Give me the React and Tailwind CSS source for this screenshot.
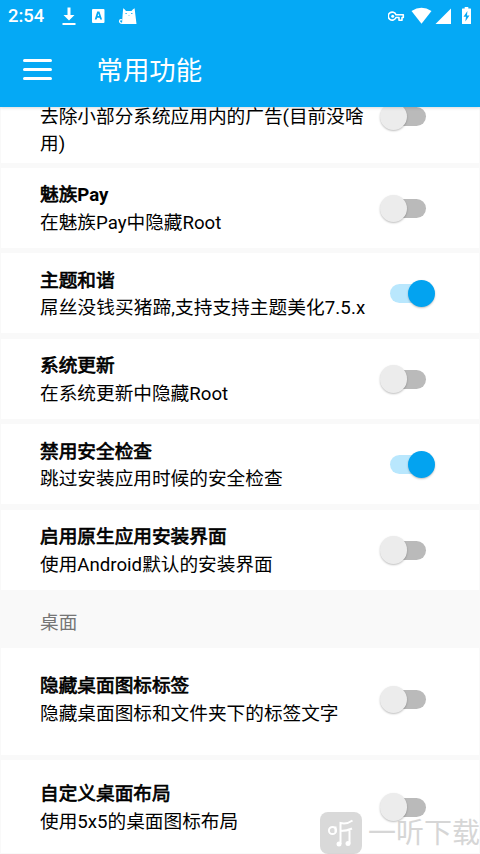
import React, { useState } from 'react';

const Switch = ({ on, onChange }) => (
  <button
    type="button"
    role="switch"
    aria-checked={on}
    onClick={onChange}
    className="relative h-[27px] w-[56px] shrink-0"
  >
    <span
      className={`absolute left-[10px] top-[4.5px] h-[19px] w-[36px] rounded-full ${on ? 'bg-[#b9e7fd]' : 'bg-[#bababa]'}`}
    />
    <span
      className={`absolute top-0 size-[27.4px] rounded-full shadow-[0_1px_2px_rgba(0,0,0,0.25)] ${on ? 'left-[28px] bg-[#03a3f0]' : 'left-0 bg-[#ececec]'}`}
    />
  </button>
);

const Row = ({ title, text, defaultOn = false, className = 'h-[80px] items-center' }) => {
  const [on, setOn] = useState(defaultOn);
  return (
    <div className={`flex shrink-0 bg-white pl-[39px] pr-[43px] ${className}`}>
      <div className="min-w-0 flex-1 pt-[4px] text-[18.67px] leading-[27.7px] text-black">
        {title && (
          <div className="whitespace-nowrap [-webkit-text-stroke:0.7px_black]">{title}</div>
        )}
        <div>{text}</div>
      </div>
      <Switch on={on} onChange={() => setOn(!on)} />
    </div>
  );
};

const StatusBar = () => (
  <div className="flex h-8 items-center pl-2 pr-[7px] text-white">
    <span className="w-[52px] text-[18.4px] font-medium leading-8">2:54</span>
    <svg width="80" height="20" viewBox="0 0 80 20" fill="currentColor">
      <path d="M7.500 1.500h3v7.500h4L9 14.500 3.500 9h4zM2.500 17h13v2h-13z" />
      <path
        fillRule="evenodd"
        d="M33 3h10.500a1 1 0 0 1 1 1v12a1 1 0 0 1-1 1H33a1 1 0 0 1-1-1V4a1 1 0 0 1 1-1zM34.700 13.500h1.900l.6-1.800h2.400l.6 1.800h1.900L39.400 5.500h-2.200zM37.700 10l.7-2.500.7 2.500z"
      />
      {/* cat with its tail curled to the left */}
      <path
        fillRule="evenodd"
        d="M63.200 2.200Q64.500 3 66 5h5.500Q73 3 74.600 2.200L75.400 9 76.500 18H62L62.600 9zM65.500 8h1.200V7h-1.200zM71.200 8h1.200V7h-1.200zM68.300 9.200h1.400l-.7.800z"
      />
      <path
        d="M65 17.400H62.500C60 17.400 59 15.800 59.800 14.200Q60.500 13.200 61.700 13.800"
        fill="none"
        stroke="currentColor"
        strokeWidth="1.200"
        strokeLinecap="round"
      />
    </svg>
    <svg className="ml-auto" width="85" height="20" viewBox="0 0 85 20" fill="none">
      <path d="M8.700 8.700H16v2.800h-1.300v2.700h-3v-2.700h-3a4 4 0 1 1 0-2.800z" transform="translate(-.7 0)" stroke="white" strokeWidth="1.600" strokeLinejoin="round" />
      <circle cx="4.700" cy="10.200" r="1.500" fill="white" />
      <path d="M23.500 5Q33.500-1.500 43.500 5L33.500 17.800z" fill="white" />
      <path d="M63 2.500V18H47.500z" fill="white" />
      <path
        fillRule="evenodd"
        d="M74.500 2.500h2.200V1h3.600v1.500h2.200q.5 0 .5.500v14.500q0 .5-.5.500h-8q-.5 0-.5-.5V3q0-.5.500-.5zM79.400 5L75.500 10.800h2.500L77.300 15.500 81.500 9.500H79z"
        fill="white"
      />
    </svg>
  </div>
);

const Watermark = () => (
  <div className="pointer-events-none absolute bottom-0 right-0 flex items-center gap-[6px] opacity-60">
    <svg width="42" height="42" viewBox="0 0 42 42">
      <rect width="42" height="42" rx="8" fill="#c0c0c0" />
      <g fill="none" stroke="white" strokeWidth="2">
        <circle cx="12.500" cy="18.500" r="3.600" />
        <path d="M15.500 14.500V20.500M20.500 32V11Q27 12.500 32.500 8.500M20.500 19Q27 19 32 16.500M29.500 18.500V31.500" />
      </g>
      <circle cx="19" cy="32" r="2.500" fill="white" />
      <circle cx="28" cy="31.500" r="2.500" fill="white" />
    </svg>
    <span className="whitespace-nowrap pt-[3px] text-[28px] leading-10 text-[#bcbcbc]">一听下载</span>
  </div>
);

const App = () => (
  <div className="relative flex h-[854px] w-[480px] flex-col overflow-hidden bg-[#f9f9f9] font-['Roboto','Noto_Sans_CJK_SC',sans-serif]">
    <header className="z-10 h-[106.700px] shrink-0 bg-[#05a9f5] shadow-[0_1px_3px_rgba(0,0,0,0.15)]">
      <StatusBar />
      <div className="flex h-[75px] items-center pl-[23px] text-white">
        <button type="button" className="flex w-[29px] flex-col gap-[6px]">
          <span className="h-[3px] rounded-full bg-white" />
          <span className="h-[3px] rounded-full bg-white" />
          <span className="h-[3px] rounded-full bg-white" />
        </button>
        <h1 className="ml-[44.500px] pt-[2px] text-[26.400px] leading-10">常用功能</h1>
      </div>
    </header>

    <main className="mx-px flex flex-1 flex-col gap-[5.400px]">
      {/* partly scrolled under the app bar */}
      <Row
        text="去除小部分系统应用内的广告(目前没啥用)"
        className="h-[56px] items-start [&>button]:-mt-[4px] [&>div]:-mt-[7px]"
      />
      <Row title={<>魅族<b className="[-webkit-text-stroke:0]">Pay</b></>} text="在魅族Pay中隐藏Root" />
      <Row
        title="主题和谐"
        text={<span className="tracking-[0.08px]">屌丝没钱买猪蹄,支持支持主题美化7.5.x</span>}
        defaultOn
      />
      <Row title="系统更新" text="在系统更新中隐藏Root" />
      <Row title="禁用安全检查" text="跳过安装应用时候的安全检查" defaultOn />
      <div className="shrink-0">
        <Row title="启用原生应用安装界面" text="使用Android默认的安装界面" />
        <h2 className="h-[58.700px] pl-[39px] pt-[4.500px] text-[18.670px] leading-[59px] text-[#757575]">桌面</h2>
        <Row
          title="隐藏桌面图标标签"
          text="隐藏桌面图标和文件夹下的标签文字"
          className="h-[106.700px] items-center pb-[5px]"
        />
      </div>
      <Row title="自定义桌面布局" text="使用5x5的桌面图标布局" className="h-[93px] items-center" />
    </main>
    <Watermark />
  </div>
);

export default App;
